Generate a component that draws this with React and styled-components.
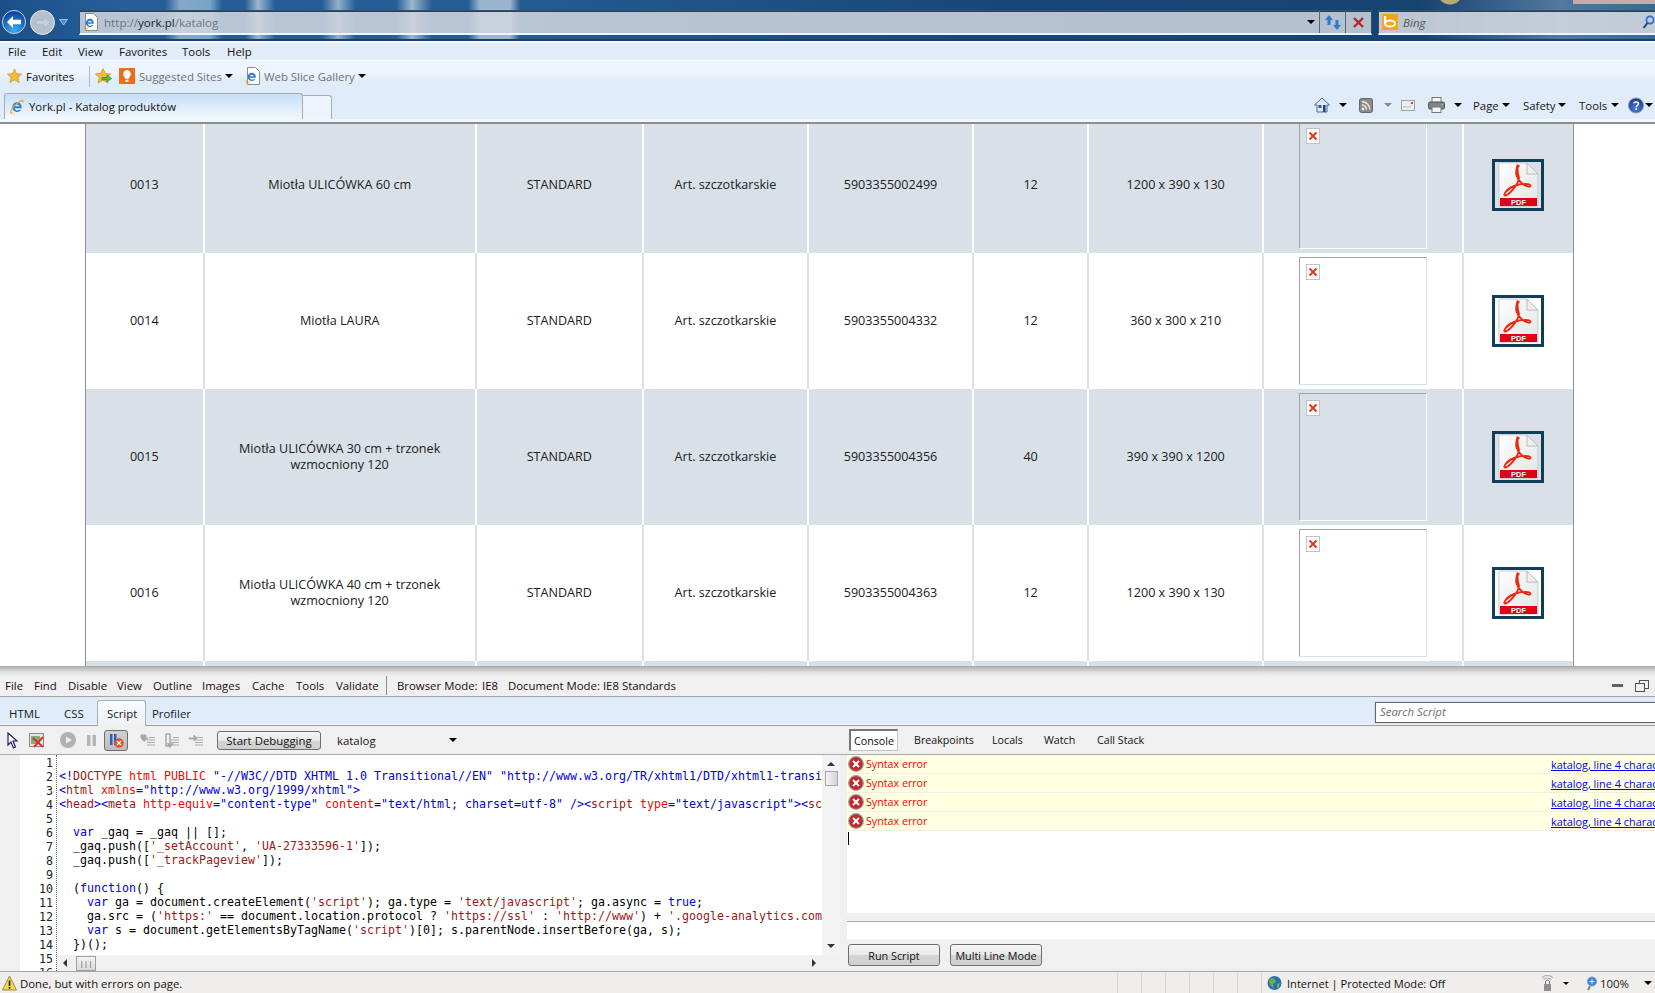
import React from 'react';
import styled, { createGlobalStyle } from 'styled-components';

const Global = createGlobalStyle`
  html, body { margin: 0; padding: 0; background: #fff; overflow: hidden; }
  * { box-sizing: border-box; }
`;
const UI = `"Open Sans", "Noto Sans", "Liberation Sans", sans-serif`;

const Shell = styled.div`
  width: 1655px; height: 993px; overflow: hidden; display: flex; flex-direction: column;
  font-family: ${UI}; font-size: 11.4px; color: #111; background: #fff;
`;

/* ---------- IE chrome ---------- */
const Glass = styled.div`
  height: 41px; flex: none; display: flex; align-items: flex-start; padding: 10px 0 0 2px;
  border-bottom: 2px solid #153f70;
  background:
    linear-gradient(180deg, #c9a9a9 0 4px, transparent 4px) 1573px 0 / 82px 4px no-repeat,
    radial-gradient(circle at 1450px -8px, #b5ad72 0 12px, transparent 13px),
    linear-gradient(90deg, transparent 165px, rgba(255,255,255,.45) 180px, rgba(190,220,240,.55) 210px, transparent 222px,
      transparent 245px, rgba(255,255,255,.55) 258px, transparent 275px,
      transparent 322px, rgba(255,255,255,.5) 338px, transparent 356px,
      transparent 396px, rgba(255,255,255,.55) 412px, transparent 432px,
      transparent 468px, rgba(255,255,255,.55) 480px, rgba(255,255,255,.55) 510px, transparent 520px),
    linear-gradient(90deg, #1c4f88 0, #265f98 120px, #245c92 500px, #184679 1000px, #17436f 1420px, #52799f 1560px, #386891 1655px);
`;
const NavWrap = styled.div`display: flex; align-items: center; width: 77px; height: 24px; flex: none;`;
const AddressBar = styled.div`
  width: 1293px; height: 25px; flex: none; display: flex; align-items: center; padding-left: 3px;
  background: rgba(208,214,222,.86); border: 1px solid #34506f; border-bottom: 2px solid #f2f5f8;
  box-shadow: inset 0 1px 0 #2d3f55; color: #6e767e; font-size: 11.6px;
`;
const AddressText = styled.span`margin-left: 5px; flex: 1; white-space: nowrap;`;
const Host = styled.b`font-weight: 400; color: #1b1f24;`;
const AddrCaret = styled.span`
  flex: none; width: 0; height: 0; margin-right: 4px;
  border-left: 4px solid transparent; border-right: 4px solid transparent; border-top: 4px solid #000;
`;
const AddrBtn = styled.div`
  width: 26px; height: 100%; flex: none; display: flex; align-items: center; justify-content: center;
  border-left: 1px solid #59677a;
`;
const SearchBar = styled.div`
  margin-left: 6px; flex: 1; height: 25px; display: flex; align-items: center; padding: 0 0 0 3px;
  background: rgba(208,214,222,.9); border: 1px solid #34506f; border-right: 0; border-bottom: 2px solid #f2f5f8;
  box-shadow: inset 0 1px 0 #2d3f55; color: #555; font-style: italic; font-size: 11.6px;
`;
const BingText = styled.span`margin-left: 5px; flex: 1;`;

const MenuBar = styled.div`
  height: 20px; flex: none; display: flex; align-items: center; padding: 1px 0 0 8px;
  background: #e0ecf9; border-bottom: 1px solid #fbfdff; box-shadow: inset 0 2px 0 #eff6fd;
`;
const MenuItem = styled.span`width: ${p => p.$w}px; flex: none; white-space: nowrap; color: #1c0c10;`;

const FavBar = styled.div`
  height: 32px; flex: none; display: flex; align-items: center; padding: 0 0 2px 7px;
  background: linear-gradient(180deg, #eff5fe 0, #eef4fd 40%, #e0ecf9 60%);
`;
const FavLabel = styled.span`
  margin-left: ${p => p.$ml || 0}px; width: ${p => p.$w}px; flex: none; white-space: nowrap;
  color: ${p => (p.$dim ? '#6f7275' : '#1c1414')};
`;
const FavSep = styled.div`margin: 0 5px 0 13px; width: 1px; height: 21px; background: #b5bec8; flex: none;`;
const IconSlot = styled.span`
  display: inline-flex; flex: none; margin-left: ${p => p.$ml || 0}px;
`;
const Caret = styled.span`
  display: inline-block; flex: none; width: 0; height: 0;
  margin-left: ${p => p.$ml || 0}px;
  border-left: ${p => p.$s || 4}px solid transparent; border-right: ${p => p.$s || 4}px solid transparent;
  border-top: ${p => p.$s || 4}px solid ${p => p.$c || '#000'};
`;

const TabRow = styled.div`
  height: 31px; flex: none; display: flex; align-items: flex-end; padding-left: 4px;
  background: #e0ecf9; border-bottom: 2px solid #8c9094; box-shadow: inset 0 -3px 0 #f2f7fc;
  padding-bottom: 3px;
`;
const Tab = styled.div`
  width: 299px; height: 26px; flex: none; display: flex; align-items: center; padding-left: 4px;
  border: 1px solid #a8adb3; border-bottom: 0; border-radius: 3px 3px 0 0;
  background: linear-gradient(180deg, #c6def8 0, #dcebfb 50%, #f2f7fd 100%);
`;
const TabTitle = styled.span`margin-left: 4px; white-space: nowrap; color: #121212;`;
const NewTab = styled.div`
  width: 29px; height: 24px; flex: none; border: 1px solid #a8adb3; border-bottom: 0; border-left: 0;
  border-radius: 0 3px 0 0; background: #eef4fb;
`;
const ToolStrip = styled.div`
  display: flex; align-items: center; height: 26px; padding-left: 9px; position: relative; top: -1px;
  margin-left: 973px; flex: none; white-space: nowrap; color: #111;
`;

/* ---------- Page ---------- */
const Page = styled.div`height: 542px; flex: none; overflow: hidden; background: #fff; padding-left: 85px;`;
const Table = styled.table`
  width: 1489px; margin-top: -7px; border-collapse: collapse; table-layout: fixed;
  border-left: 1px solid #8492a3; border-right: 1px solid #8492a3; color: #202020; font-size: 12.6px;
`;
const Tr = styled.tr`
  height: 136px; background: ${p => (p.$alt ? '#d9e0e7' : '#fff')};
  --sep: ${p => (p.$alt ? '#fff' : '#d9e0e7')};
`;
const Td = styled.td`
  padding: 0 4px; text-align: center; vertical-align: middle; line-height: 16px;
  border-right: 2px solid var(--sep);
  &:last-child { border-right: 0; padding-right: 6px; }
`;
const Cells = styled.div`display: flex; justify-content: center; align-items: center;`;
const ImageBox = styled.div`
  width: 128px; height: 128px; padding: 6px; text-align: left; display: flex; align-items: flex-start;
  border: 1px solid var(--sep); border-left-color: #a3a3a3; border-top-color: #a3a3a3;
`;
const BrokenIcon = styled.span`
  width: 14px; height: 16px; display: flex; align-items: center; justify-content: center;
  background: #fff; border: 1px solid #c2c2c2;
`;
const PdfFrame = styled.div`width: 52px; height: 52px; border: 3px solid #103d57; display: flex;`;

/* ---------- Dev tools ---------- */
const DevTools = styled.div`flex: 1; min-height: 0; display: flex; flex-direction: column; background: #f0f0f0;`;
const DevMenu = styled.div`
  height: 31px; flex: none; display: flex; align-items: flex-end; padding: 0 0 0 5px; 
  border-bottom: 1px solid #a4a4a4;
  background: linear-gradient(180deg, #a9a9a9 0, #dfdfdf 6px, #f0f0f0 10px);
`;
const DevMenuRow = styled.div`display: flex; align-items: center; height: 22px; flex: 1;`;
const DevSep = styled.div`width: 1px; height: 19px; background: #8f8f8f; flex: none; margin-right: 10px;`;
const WinIcons = styled.div`margin-left: auto; width: 37px; display: flex; align-items: center; gap: 12px; padding-top: 1px; flex: none; margin-right: 6px;`;
const DevTabs = styled.div`
  height: 29px; flex: none; display: flex; align-items: flex-end; background: #e0ecf9; padding-left: 9px;
  border-bottom: 1px solid #9c9c9c; box-shadow: inset 0 -1px 0 #f2f2f2;
`;
const DevTab = styled.div`
  width: ${p => p.$w}px; flex: none; height: ${p => (p.$on ? 26 : 24)}px; display: flex; align-items: center;
  margin-right: ${p => p.$mr || 0}px;
  ${p => p.$on && `
    margin-bottom: -1px; padding-left: 9px; background: linear-gradient(#f8fbfe,#eef2f5);
    border: 1px solid #a9b0b8; border-bottom: 0; border-radius: 3px 3px 0 0;`}
  color: #16181c;
`;
const SearchScript = styled.div`
  margin: 0 0 2px auto; width: 280px; height: 21px; background: #fff; border: 1px solid #5f6670; border-right: 0;
  box-shadow: 0 0 0 1px #d6e2ee; padding-left: 4px; line-height: 18px; font-style: italic; color: #6d6d6d;
`;
const Body = styled.div`flex: 1; min-height: 0; display: flex; flex-direction: column;`;
const BarRow = styled.div`
  height: 29px; flex: none; display: flex; border-bottom: 1px solid #a9a9a9; background: #f0f0f0;
`;
const DebugBar = styled.div`width: 847px; flex: none; display: flex; align-items: center; padding-left: 7px;`;
const ToggleBtn = styled.div`
  width: 24px; height: 21px; margin-left: 8px; flex: none; display: flex; align-items: center; justify-content: center;
  border: 1px solid #6d6d6d; border-radius: 3px; background: linear-gradient(#d0d0d0,#bdbdbd);
`;
const PushBtn = styled.div`
  width: ${p => p.$w}px; height: ${p => p.$h || 19}px; flex: none; margin-left: ${p => p.$ml || 0}px;
  display: flex; align-items: center; justify-content: center; white-space: nowrap;
  border: 1px solid #6f6f6f; border-radius: 3px; color: #111;
  background: linear-gradient(#f5f5f5 0, #e9e9e9 50%, #d4d4d4 51%, #cfcfcf 100%);
`;
const Katalog = styled.span`margin-left: 16px; width: 112px; flex: none; color: #1a1014;`;
const ConsoleTabs = styled.div`flex: 1; display: flex; align-items: center; padding-left: 2px; font-size: 10.7px;`;
const ConsoleTab = styled.span`
  width: ${p => p.$w}px; flex: none; height: 22px; display: flex; align-items: center;
  ${p => p.$on && `
    justify-content: center; margin-right: 16px; background: #fff;
    border: 1px solid #c4c4c4; border-left: 2px solid #777; border-top: 2px solid #777;`}
`;
const Panes = styled.div`flex: 1; min-height: 0; display: flex;`;
const LeftPane = styled.div`width: 847px; flex: none; display: flex; overflow: hidden;`;
const Gutter = styled.div`width: 20px; flex: none; background: #f0f0f0;`;
const Numbers = styled.div`
  width: 37px; flex: none; background: #fff; border-right: 1px dotted #666; text-align: right; padding: 1px 3px 0 0;
  font: 11.63px/14px "DejaVu Sans Mono", monospace; overflow: hidden; color: #222;
`;
const CodeCol = styled.div`flex: 1; min-width: 0; display: flex; flex-direction: column;`;
const CodeRow = styled.div`flex: 1; min-height: 0; display: flex;`;
const Code = styled.div`
  width: 765px; flex: none; background: #fff; overflow: hidden; padding: 0 0 0 2px;
  font: 11.63px/14px "DejaVu Sans Mono", monospace; white-space: pre; color: #000;
`;
const CodeLine = styled.div`height: 14px;`;
const colors = { b: '#0000e0', m: '#a31515', r: '#ff0000', s: '#a31515' };
const Tok = styled.span`color: ${p => colors[p.$k] || '#000'};`;
const VScroll = styled.div`
  width: 18px; flex: none; background: #f3f3f3; display: flex; flex-direction: column; align-items: center;
  padding-top: 7px; gap: 5px;
`;
const VThumb = styled.div`width: 13px; height: 15px; border: 1px solid #a8a8a8; background: linear-gradient(90deg,#f4f4f4,#d4d4d4);`;
const ArrowDown = styled.div`margin-top: auto; margin-bottom: 7px; width: 0; height: 0; border: 4px solid transparent; border-top: 4px solid #333; border-bottom: 0;`;
const ArrowUp = styled.div`width: 0; height: 0; border: 4px solid transparent; border-bottom: 4px solid #333; border-top: 0;`;
const HScroll = styled.div`
  height: 16px; flex: none; margin-right: 25px; background: #f0f0f0; display: flex; align-items: center; padding-left: 6px;
`;
const HLeft = styled.div`width: 0; height: 0; border: 4px solid transparent; border-right: 4px solid #333; border-left: 0; flex: none;`;
const HRight = styled.div`margin-left: auto; margin-right: 6px; width: 0; height: 0; border: 4px solid transparent; border-left: 4px solid #333; border-right: 0; flex: none;`;
const HThumb = styled.div`
  margin-left: 9px; width: 20px; height: 15px; flex: none; border: 1px solid #9f9f9f; background: linear-gradient(#f5f5f5,#d8d8d8);
  text-align: center; font-size: 8px; line-height: 12px; color: #555;
`;
const RightPane = styled.div`flex: 1; min-width: 0; display: flex; flex-direction: column;`;
const ConsoleOut = styled.div`height: 158px; flex: none; background: #fff;`;
const ErrRow = styled.div`
  height: 19px; display: flex; align-items: center; padding-left: 1px; background: #ffffe1; border-bottom: 1px solid #eeeee6;
  color: #ff0000; overflow: hidden; font-size: 10.7px;
`;
const ErrText = styled.span`margin-left: 2px; flex: none; width: 685px;`;
const ErrLink = styled.a`color: #0000f0; text-decoration: underline; white-space: nowrap; font-size: 10.9px; flex: none;`;
const Cursor = styled.div`width: 1px; height: 13px; background: #000; margin: 1px 0 0 1px;`;
const InputLine = styled.div`height: 18px; margin-top: 8px; flex: none; background: #fff; border-top: 1px solid #a9a9a9;`;
const RunRow = styled.div`flex: 1; display: flex; align-items: flex-start; padding: 5px 0 0 1px; gap: 10px; font-size: 10.8px;`;
const Status = styled.div`
  height: 22px; flex: none; display: flex; align-items: center; padding: 1px 0 0 2px;
  background: #f0eeed; border-top: 1px solid #a6a6a6;
`;
const StatusText = styled.span`margin-left: 3px; width: 1097px; flex: none; white-space: nowrap;`;
const StatusCell = styled.div`width: 24px; height: 100%; flex: none; border-left: 1px solid #d9d7d6;`;
const StatusZone = styled.div`
  height: 100%; width: 279px; flex: none; display: flex; align-items: center; padding-left: 5px; border-left: 1px solid #d9d7d6; white-space: nowrap;
`;
const ZoneLabel = styled.span`margin-left: 5px; font-size: 11.1px;`;
const StatusTail = styled.div`display: flex; align-items: center; flex: 1; height: 100%; white-space: nowrap;`;

/* ---------- Icons ---------- */
const IE = ({ s = 16 }) => (
  <svg width={s} height={s} viewBox="0 0 16 16">
    <path d="M8.2 3.2a4.8 4.8 0 0 0-4.9 5 4.9 4.9 0 0 0 8.9 2.6H9.9a2.6 2.6 0 0 1-4.3-1.6h7.1C13 5.600 11 3.200 8.200 3.200zM5.700 7.300a2.500 2.500 0 0 1 4.800 0z" fill="#2b7fd0" />
    <path d="M14.200 1.300C12.500.4 9 2.600 5.500 6 2.300 9.300.4 12.900 1.400 14.300c.9 1 3.200.3 5.200-1-1.800.7-3.400.9-4-.1-.6-1.100 1-3.800 3.700-6.500C9 4 12.300 2 13.800 2.500c.8.300.8 1.400.2 2.800.9-1.500 1.200-3.300.2-4z" fill="#e8a92a" />
  </svg>
);
const PageIE = () => (
  <svg width="16" height="18" viewBox="0 0 16 18">
    <path d="M2.500.5h8l4 4v13h-12z" fill="#fbfbfb" stroke="#8d8d8d" />
    <g transform="translate(0,3) scale(.85)"><path d="M8.200 3.200a4.800 4.800 0 0 0-4.900 5 4.900 4.900 0 0 0 8.900 2.600H9.900a2.600 2.600 0 0 1-4.300-1.600h7.100C13 5.600 11 3.200 8.200 3.200zM5.700 7.300a2.500 2.500 0 0 1 4.800 0z" fill="#2b7fd0" /><path d="M3 11.500C1 14 .8 15 1.500 15.400c1 .5 3-.5 5-1.800" stroke="#e8a92a" fill="none" /></g>
  </svg>
);
const BackBtn = () => (
  <svg width="24" height="24" viewBox="0 0 24 24">
    <defs><radialGradient id="bk" cx=".5" cy=".85" r=".8"><stop offset="0" stopColor="#39b1f2" /><stop offset="1" stopColor="#0b3f9a" /></radialGradient></defs>
    <circle cx="12" cy="12" r="11.500" fill="url(#bk)" stroke="#c5d8e8" />
    <path d="M5 12l6-6v3.700h8v4.600h-8V18z" fill="#fff" />
  </svg>
);
const FwdBtn = () => (
  <svg width="25" height="25" viewBox="0 0 25 25">
    <circle cx="12.500" cy="12.500" r="12" fill="#b4c0cd" stroke="#e4e9ef" />
    <path d="M20 12.500l-6-6v3.700H6v4.600h8v3.700z" fill="#c6d0da" stroke="#a5b2c0" strokeWidth=".7" />
  </svg>
);
const DownBlue = () => (
  <svg width="9" height="7" viewBox="0 0 9 7"><path d="M.5.500h8L4.500 6z" fill="#3c8fe0" stroke="#cde4f8" strokeWidth=".7" /></svg>
);
const Refresh = () => (
  <svg width="18" height="19" viewBox="0 0 18 19">
    <path d="M1 7l4-5 4 5H6.500v5h-3V7zM17 12l-4 5-4-5h2.500V7h3v5z" fill="#2f7bc9" />
  </svg>
);
const RedX = () => (
  <svg width="13" height="13" viewBox="0 0 13 13"><path d="M2 2l9 9M11 2l-9 9" stroke="#b5262a" strokeWidth="2.400" /></svg>
);
const Bing = () => (
  <svg width="16" height="16" viewBox="0 0 16 16">
    <rect width="16" height="16" fill="#f9a21a" />
    <path d="M3 2v9" stroke="#fff" strokeWidth="2.200" /><ellipse cx="8" cy="9.500" rx="5" ry="3" fill="none" stroke="#fff" strokeWidth="2" />
  </svg>
);
const Lens = () => (
  <svg width="13" height="15" viewBox="0 0 13 15"><circle cx="8" cy="5" r="3.600" fill="none" stroke="#2371c8" strokeWidth="1.700" /><path d="M5.500 8L1.500 13" stroke="#173f78" strokeWidth="2" /></svg>
);
const Star = ({ plus }) => (
  <svg width={plus ? 17 : 16} height="16" viewBox="0 0 17 16">
    <path d="M8 .5l2.300 5 5.400.5-4.100 3.600 1.300 5.400L8 12.100 3.100 15l1.300-5.400L.3 6l5.400-.5z" fill="#f5bc32" stroke="#c78d1f" strokeWidth=".7" />
    {plus && <path d="M7 9.500h5V7l4.500 3.500L12 14v-2.300H7z" fill="#56c23c" stroke="#2c8a1d" strokeWidth=".7" />}
  </svg>
);
const Bulb = () => (
  <svg width="16" height="16" viewBox="0 0 16 16">
    <rect width="16" height="16" fill="#ef6c1f" />
    <path d="M8 2a4 4 0 0 0-2.500 7c.6.600.7 1.200.8 2h3.400c.1-.8.200-1.400.8-2A4 4 0 0 0 8 2z" fill="#fff" />
    <rect x="6.500" y="11.800" width="3" height="2" fill="#fff" />
  </svg>
);
const Home = () => (
  <svg width="16" height="16" viewBox="0 0 16 16">
    <path d="M8 1L.5 8H3v7h10V8h2.500z" fill="#dfe9f4" stroke="#3b6ea8" />
    <rect x="4.500" y="8" width="3" height="3" fill="#2c5f9a" /><rect x="9" y="8" width="2.600" height="7" fill="#25477a" />
  </svg>
);
const Rss = () => (
  <svg width="14" height="15" viewBox="0 0 14 15">
    <rect x=".5" y=".5" width="13" height="14" rx="2" fill="#8a8a8a" stroke="#666" />
    <circle cx="4" cy="11" r="1.400" fill="#eee" /><path d="M3 7a4.500 4.500 0 0 1 4.500 4.500M3 3.800a7.800 7.800 0 0 1 7.800 7.800" fill="none" stroke="#eee" strokeWidth="1.400" />
  </svg>
);
const Mail = () => (
  <svg width="14" height="11" viewBox="0 0 14 11"><rect x=".5" y=".5" width="13" height="10" fill="#eee" stroke="#a3a3a3" /><rect x="10" y="2" width="2" height="2" fill="#d44" /><path d="M2 7h8" stroke="#bbb" /></svg>
);
const Printer = () => (
  <svg width="17" height="16" viewBox="0 0 17 16">
    <rect x="4" y=".5" width="9" height="5" fill="#f4f4f4" stroke="#777" /><rect x=".5" y="5" width="16" height="7" rx="1.500" fill="#7f8488" stroke="#555" />
    <rect x="4" y="10" width="9" height="5.500" fill="#f4f4f4" stroke="#777" /><rect x="13.500" y="7" width="1.500" height="1.500" fill="#6d6" />
  </svg>
);
const Help = () => (
  <svg width="16" height="17" viewBox="0 0 16 17">
    <defs><radialGradient id="hp" cx=".5" cy=".7" r=".7"><stop offset="0" stopColor="#4d7fe0" /><stop offset="1" stopColor="#17348f" /></radialGradient></defs>
    <circle cx="8" cy="8.500" r="7.500" fill="url(#hp)" stroke="#8b97b0" />
    <path d="M5.700 6.300C6 4.500 10.500 4.300 10.500 6.700c0 1.800-2.300 1.800-2.300 3.600" fill="none" stroke="#fff" strokeWidth="1.500" /><rect x="7.400" y="11.300" width="1.600" height="1.700" fill="#fff" />
  </svg>
);
const Broken = () => (
  <svg width="10" height="10" viewBox="0 0 10 10"><path d="M1.500 1.500l7 7M8.500 1.500l-7 7" stroke="#e2351d" strokeWidth="2" /></svg>
);
const Pdf = ({ id }) => (
  <svg width="46" height="46" viewBox="0 0 46 46">
    <defs><linearGradient id={`pg${id}`} x1="0" y1="0" x2="1" y2="1"><stop offset="0" stopColor="#fff" /><stop offset="1" stopColor="#e3e3e3" /></linearGradient></defs>
    <path d="M4 1h28l11 11v32H4z" fill={`url(#pg${id})`} stroke="#c9c9c9" />
    <path d="M32 1l11 11H32z" fill="#eee" stroke="#bbb" />
    <path d="M24.500 4c-2.500-.5-2.500 5-.8 10.500 1.700 5.500-9 18-13 19-3.500 1 0-6.500 8.500-9.500 7.500-2.500 16-3 16.300-.2.200 2.700-11-.8-14-10.500-1.500-5 2-9.500 0-9.800z" fill="none" stroke="#ea2a10" strokeWidth="1.900" />
    <rect x="5" y="36" width="37" height="8" fill="#e30012" />
    <text x="23.500" y="43" textAnchor="middle" fontFamily="Liberation Sans, sans-serif" fontSize="7.500" fontWeight="700" fill="#fff">PDF</text>
  </svg>
);
const Cursor2 = () => (
  <svg width="11" height="17" viewBox="0 0 11 17"><path d="M1 1v12l3-3 2.500 6 2-1L6 9h4z" fill="#fff" stroke="#2c1a66" strokeWidth="1.200" /></svg>
);
const ClearBrowser = () => (
  <svg width="16" height="15" viewBox="0 0 16 15">
    <rect x=".5" y=".5" width="14" height="13" fill="#e8e8e8" stroke="#888" /><rect x="2" y="3" width="9" height="8" fill="#7fae7f" />
    <path d="M4 5l10 9M14 4L5 14" stroke="#e03020" strokeWidth="2" />
  </svg>
);
const Play = () => (
  <svg width="16" height="16" viewBox="0 0 16 16"><circle cx="8" cy="8" r="8" fill="#b0b0b0" /><path d="M6 4.500l6 3.500-6 3.500z" fill="#eee" /></svg>
);
const Pause = () => (
  <svg width="9" height="11" viewBox="0 0 9 11"><rect width="3.500" height="11" fill="#b4b4b4" /><rect x="5.500" width="3.500" height="11" fill="#b4b4b4" /></svg>
);
const BreakOn = () => (
  <svg width="15" height="15" viewBox="0 0 15 15">
    <rect x="1" y="1" width="2.500" height="11" fill="#2a5fc0" /><rect x="5" y="1" width="2.500" height="11" fill="#2a5fc0" />
    <circle cx="10" cy="10" r="4.700" fill="#e2502c" /><path d="M8 8l4 4M12 8l-4 4" stroke="#fff" strokeWidth="1.300" />
  </svg>
);
const Step = ({ v }) => (
  <svg width="16" height="15" viewBox="0 0 16 15" fill="none" stroke="#a9a9a9">
    <path d="M7 7h8M7 9.500h8M7 12h8M9 4.500h6" />
    {v === 0 && <path d="M1 2h5v3h2L4 8.500 1 5z" fill="#a9a9a9" />}
    {v === 1 && <path d="M2 1h4v12H2zM4 11l2 3 2-3z" fill="#efefef" strokeWidth="1.500" />}
    {v === 2 && <path d="M1 5h5V2l3 3-3 3V6H1z" fill="#a9a9a9" />}
  </svg>
);
const ErrIcon = () => (
  <svg width="16" height="16" viewBox="0 0 16 16" style={{ flex: 'none' }}>
    <circle cx="8" cy="8" r="7.300" fill="#c4262c" stroke="#9a9a9a" strokeWidth="1.300" />
    <path d="M5 5l6 6M11 5l-6 6" stroke="#fff" strokeWidth="2" />
  </svg>
);
const Warn = () => (
  <svg width="15" height="16" viewBox="0 0 15 16">
    <path d="M7.500 1L14.500 15H.5z" fill="#fbd54a" stroke="#9a8a40" /><rect x="6.700" y="5.500" width="1.700" height="5.500" fill="#222" /><rect x="6.700" y="12" width="1.700" height="1.700" fill="#222" />
  </svg>
);
const Globe = () => (
  <svg width="15" height="16" viewBox="0 0 15 16">
    <circle cx="7.500" cy="8" r="7" fill="#2a6fb5" /><path d="M4 3l4 1 1 3-3 2 1 4-3-2-2-4zM10 9l3-1-1 4-2 1z" fill="#69b24a" />
  </svg>
);
const Lock = () => (
  <svg width="15" height="17" viewBox="0 0 15 17">
    <path d="M2 3a7 7 0 0 1 11 0M3.500 5a5 5 0 0 1 8 0" fill="none" stroke="#b3b3b3" strokeWidth="1.200" /><rect x="4" y="9" width="7" height="7" fill="#8f8f8f" /><path d="M5.500 9V7a2 2 0 0 1 4 0v2" fill="none" stroke="#777" />
  </svg>
);
const Zoom = () => (
  <svg width="12" height="15" viewBox="0 0 12 15">
    <circle cx="6" cy="5.500" r="4.600" fill="#3a83d8" stroke="#86a8cc" /><path d="M3.800 5.500h4.400M6 3.300v4.400" stroke="#fff" /><path d="M4 10l-2 4" stroke="#8a7a50" strokeWidth="1.800" />
  </svg>
);
const MinIcon = () => <svg width="11" height="4" viewBox="0 0 11 4"><rect width="11" height="3" fill="#5c665c" /></svg>;
const RestoreIcon = () => (
  <svg width="14" height="12" viewBox="0 0 14 12" fill="#f0f0f0" stroke="#4d554d"><rect x="4.500" y=".5" width="9" height="8" /><rect x=".5" y="3.500" width="9" height="8" /></svg>
);

/* ---------- Data ---------- */
const WIDTHS = [118, 272, 167, 165, 165, 115, 175, 200, 110];
const ROWS = [
  ['0013', 'Miotła ULICÓWKA 60 cm', '5903355002499', '12', '1200 x 390 x 130'],
  ['0014', 'Miotła LAURA', '5903355004332', '12', '360 x 300 x 210'],
  ['0015', 'Miotła ULICÓWKA 30 cm + trzonek wzmocniony 120', '5903355004356', '40', '390 x 390 x 1200'],
  ['0016', 'Miotła ULICÓWKA 40 cm + trzonek wzmocniony 120', '5903355004363', '12', '1200 x 390 x 130'],
];
const BROWSER_MENU = [['File', 34], ['Edit', 36], ['View', 41], ['Favorites', 63], ['Tools', 45], ['Help', 30]];
const DEV_MENU = [['File', 29], ['Find', 34], ['Disable', 49], ['View', 36], ['Outline', 49], ['Images', 50], ['Cache', 44], ['Tools', 40], ['Validate', 50]];

const CODE = [
  [],
  [['b', '<!'], ['m', 'DOCTYPE '], ['r', 'html PUBLIC '], ['b', '"-//W3C//DTD XHTML 1.0 Transitional//EN" "http://www.w3.org/TR/xhtml1/DTD/xhtml1-transitional.dtd">']],
  [['b', '<'], ['m', 'html '], ['r', 'xmlns'], ['b', '="http://www.w3.org/1999/xhtml">']],
  [['b', '<'], ['m', 'head'], ['b', '><'], ['m', 'meta '], ['r', 'http-equiv'], ['b', '="content-type" '], ['r', 'content'], ['b', '="text/html; charset=utf-8" />'], ['b', '<'], ['m', 'script '], ['r', 'type'], ['b', '="text/javascript"><'], ['m', 'script']],
  [],
  [['', '  '], ['b', 'var'], ['', ' _gaq = _gaq || [];']],
  [['', "  _gaq.push(["], ['s', "'_setAccount'"], ['', ', '], ['s', "'UA-27333596-1'"], ['', ']);']],
  [['', '  _gaq.push(['], ['s', "'_trackPageview'"], ['', ']);']],
  [],
  [['', '  ('], ['b', 'function'], ['', '() {']],
  [['', '    '], ['b', 'var'], ['', ' ga = document.createElement('], ['s', "'script'"], ['', '); ga.type = '], ['s', "'text/javascript'"], ['', '; ga.async = '], ['b', 'true'], ['', ';']],
  [['', '    ga.src = ('], ['s', "'https:'"], ['', ' == document.location.protocol ? '], ['s', "'https://ssl'"], ['', ' : '], ['s', "'http://www'"], ['', ') + '], ['s', "'.google-analytics.com/ga.js'"], ['', ';']],
  [['', '    '], ['b', 'var'], ['', ' s = document.getElementsByTagName('], ['s', "'script'"], ['', ')[0]; s.parentNode.insertBefore(ga, s);']],
  [['', '  })();']],
  [],
];
const NUMBERS = Array.from({ length: 16 }, (_, i) => i + 1);

export default function App() {
  return (
    <Shell>
      <Global />
      <Glass>
        <NavWrap>
          <BackBtn /><IconSlot $ml={4}><FwdBtn /></IconSlot><IconSlot $ml={4}><DownBlue /></IconSlot>
        </NavWrap>
        <AddressBar>
          <PageIE />
          <AddressText>http://<Host>york.pl</Host>/katalog</AddressText>
          <AddrCaret />
          <AddrBtn><Refresh /></AddrBtn>
          <AddrBtn><RedX /></AddrBtn>
        </AddressBar>
        <SearchBar>
          <Bing /><BingText>Bing</BingText><Lens />
        </SearchBar>
      </Glass>

      <MenuBar>
        {BROWSER_MENU.map(([t, w]) => <MenuItem key={t} $w={w}>{t}</MenuItem>)}
      </MenuBar>

      <FavBar>
        <Star />
        <FavLabel $ml={3} $w={50}>Favorites</FavLabel>
        <FavSep />
        <Star plus />
        <IconSlot $ml={7}><Bulb /></IconSlot>
        <FavLabel $ml={4} $w={86} $dim>Suggested Sites</FavLabel>
        <Caret $s={4} />
        <IconSlot $ml={12}><PageIE /></IconSlot>
        <FavLabel $ml={3} $w={94} $dim>Web Slice Gallery</FavLabel>
        <Caret $s={4} />
      </FavBar>

      <TabRow>
        <Tab><IE /><TabTitle>York.pl - Katalog produktów</TabTitle></Tab>
        <NewTab />
        <ToolStrip>
          <Home />
          <Caret $ml={9} />
          <IconSlot $ml={12}><Rss /></IconSlot>
          <Caret $ml={11} $c="#8a8a8a" />
          <IconSlot $ml={9}><Mail /></IconSlot>
          <IconSlot $ml={13}><Printer /></IconSlot>
          <Caret $ml={9} />
          <FavLabel $ml={11} $w={29}>Page</FavLabel><Caret />
          <FavLabel $ml={13} $w={35}>Safety</FavLabel><Caret />
          <FavLabel $ml={13} $w={32}>Tools</FavLabel><Caret />
          <IconSlot $ml={9}><Help /></IconSlot>
          <Caret $ml={1} />
        </ToolStrip>
      </TabRow>

      <Page>
        <Table>
          <colgroup>{WIDTHS.map((w, i) => <col key={i} style={{ width: w }} />)}</colgroup>
          <tbody>
            {ROWS.map((r, i) => (
              <Tr key={r[0]} $alt={i % 2 === 0}>
                <Td>{r[0]}</Td>
                <Td>{r[1]}</Td>
                <Td>STANDARD</Td>
                <Td>Art. szczotkarskie</Td>
                <Td>{r[2]}</Td>
                <Td>{r[3]}</Td>
                <Td>{r[4]}</Td>
                <Td><Cells><ImageBox><BrokenIcon><Broken /></BrokenIcon></ImageBox></Cells></Td>
                <Td><Cells><PdfFrame><Pdf id={i} /></PdfFrame></Cells></Td>
              </Tr>
            ))}
            <Tr $alt>{WIDTHS.map((_, i) => <Td key={i} />)}</Tr>
          </tbody>
        </Table>
      </Page>

      <DevTools>
        <DevMenu>
          <DevMenuRow>
            {DEV_MENU.map(([t, w]) => <MenuItem key={t} $w={w}>{t}</MenuItem>)}
            <DevSep />
            <MenuItem $w={85}>Browser Mode:</MenuItem>
            <MenuItem $w={26}>IE8</MenuItem>
            <MenuItem $w={170}>Document Mode: IE8 Standards</MenuItem>
            <WinIcons><MinIcon /><RestoreIcon /></WinIcons>
          </DevMenuRow>
        </DevMenu>
        <DevTabs>
          <DevTab $w={55}>HTML</DevTab>
          <DevTab $w={33}>CSS</DevTab>
          <DevTab $w={49} $on $mr={6}>Script</DevTab>
          <DevTab $w={60}>Profiler</DevTab>
          <SearchScript>Search Script</SearchScript>
        </DevTabs>
        <Body>
          <BarRow>
            <DebugBar>
              <Cursor2 />
              <IconSlot $ml={11}><ClearBrowser /></IconSlot>
              <IconSlot $ml={15}><Play /></IconSlot>
              <IconSlot $ml={11}><Pause /></IconSlot>
              <ToggleBtn><BreakOn /></ToggleBtn>
              <IconSlot $ml={12}><Step v={0} /></IconSlot>
              <IconSlot $ml={8}><Step v={1} /></IconSlot>
              <IconSlot $ml={8}><Step v={2} /></IconSlot>
              <PushBtn $w={104} $ml={13}>Start Debugging</PushBtn>
              <Katalog>katalog</Katalog>
              <Caret $s={4} />
            </DebugBar>
            <ConsoleTabs>
              <ConsoleTab $w={49} $on>Console</ConsoleTab>
              <ConsoleTab $w={78}>Breakpoints</ConsoleTab>
              <ConsoleTab $w={52}>Locals</ConsoleTab>
              <ConsoleTab $w={53}>Watch</ConsoleTab>
              <ConsoleTab $w={80}>Call Stack</ConsoleTab>
            </ConsoleTabs>
          </BarRow>
          <Panes>
            <LeftPane>
              <Gutter />
              <Numbers>{NUMBERS.map(n => <div key={n}>{n}</div>)}</Numbers>
              <CodeCol>
                <CodeRow>
                  <Code>
                    {CODE.map((line, i) => (
                      <CodeLine key={i}>{line.map(([k, t], j) => <Tok key={j} $k={k}>{t}</Tok>)}</CodeLine>
                    ))}
                  </Code>
                  <VScroll><ArrowUp /><VThumb /><ArrowDown /></VScroll>
                </CodeRow>
                <HScroll><HLeft /><HThumb>|||</HThumb><HRight /></HScroll>
              </CodeCol>
            </LeftPane>
            <RightPane>
              <ConsoleOut>
                {[0, 1, 2, 3].map(i => (
                  <ErrRow key={i}>
                    <ErrIcon /><ErrText>Syntax error</ErrText>
                    <ErrLink>katalog, line 4 character 1</ErrLink>
                  </ErrRow>
                ))}
                <Cursor />
              </ConsoleOut>
              <InputLine />
              <RunRow>
                <PushBtn $w={92} $h={22}>Run Script</PushBtn>
                <PushBtn $w={92} $h={22}>Multi Line Mode</PushBtn>
              </RunRow>
            </RightPane>
          </Panes>
        </Body>
      </DevTools>

      <Status>
        <Warn />
        <StatusText>Done, but with errors on page.</StatusText>
        <StatusCell /><StatusCell /><StatusCell /><StatusCell /><StatusCell /><StatusCell />
        <StatusZone><Globe /><ZoneLabel>Internet | Protected Mode: Off</ZoneLabel></StatusZone>
        <StatusTail>
          <Lock /><Caret $ml={8} $s={3} />
          <IconSlot $ml={17}><Zoom /></IconSlot>
          <FavLabel $ml={2} $w={44}>100%</FavLabel>
          <Caret $s={4} />
        </StatusTail>
      </Status>
    </Shell>
  );
}
